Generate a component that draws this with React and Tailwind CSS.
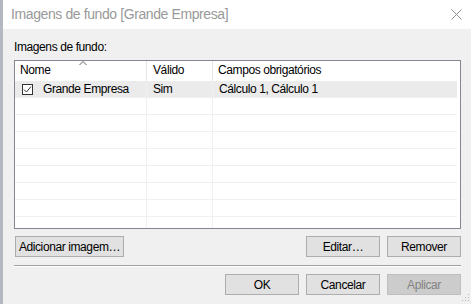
import React from "react";

const font = { fontFamily: '"Liberation Sans", Arial, sans-serif' };

const Btn = ({ children, className = "", disabled }) => (
  <div
    className={
      "h-[21px] flex items-center justify-center border text-[12px] tracking-[-0.4px] leading-none whitespace-nowrap " +
      (disabled
        ? "bg-[#cccccc] border-[#bfbfbf] text-[#838383] "
        : "bg-[#e1e1e1] border-[#adadad] text-black ") +
      className
    }
  >
    {children}
  </div>
);

const Check = () => (
  <svg width="11" height="11" viewBox="0 0 11 11" className="shrink-0">
    <rect x="0.5" y="0.5" width="10" height="10" fill="white" stroke="#333" />
    <polyline points="2,5.5 4.5,8 9,2.5" fill="none" stroke="#333" strokeWidth="1" />
  </svg>
);

const rows = 9;

export default function App() {
  return (
    <div className="w-[471px] h-[304px] flex overflow-hidden" style={font}>
      {/* behind window edge */}
      <div className="w-[3px] h-full bg-[#b3b8c3]" />

      <div className="flex-1 flex flex-col">
        {/* Title bar */}
        <div className="h-[29px] bg-white flex items-center justify-between pl-[8px] pr-[9px]">
          <span className="text-[14px] tracking-[-0.4px] text-[#999999] whitespace-nowrap">
            Imagens de fundo [Grande Empresa]
          </span>
          <svg width="11" height="11" viewBox="0 0 11 11">
            <path d="M0.5 0.5 L10.5 10.5 M10.5 0.5 L0.5 10.5" stroke="#8f8f8f" strokeWidth="1" />
          </svg>
        </div>

        {/* Body */}
        <div className="flex-1 bg-[#f0f0f0] pl-[11px] pr-[10px] pt-[11px] relative text-[12px] tracking-[-0.4px]">
          <div className="h-[15px] leading-[15px] text-black">Imagens de fundo:</div>

          {/* List view */}
          <div className="mt-[5px] h-[169px] border border-[#828790] bg-white overflow-hidden pr-[3px] text-black whitespace-nowrap">
            <div className="h-[20px] flex">
              <div className="w-[132px] border-r border-[#e5e5e5] pl-[5px] flex items-end pb-[2px] relative">
                Nome
                <svg width="8" height="5" viewBox="0 0 8 5" className="absolute left-[64px] top-0">
                  <polyline points="0.5,4 4,0.5 7.5,4" fill="none" stroke="#5f5f5f" strokeWidth="1" />
                </svg>
              </div>
              <div className="w-[66px] border-r border-[#e5e5e5] pl-[6px] flex items-end pb-[2px]">Válido</div>
              <div className="flex-1 pl-[5px] flex items-end pb-[2px]">Campos obrigatórios</div>
            </div>

            <div className="h-[17px] flex bg-[#ebebeb] border-b border-[#f0f0f0]">
              <div className="w-[132px] border-r border-[#f0f0f0] pl-[7px] flex items-center gap-[10px]">
                <Check />
                <span>Grande Empresa</span>
              </div>
              <div className="w-[66px] border-r border-[#f0f0f0] pl-[6px] flex items-center">Sim</div>
              <div className="flex-1 pl-[6px] flex items-center">Cálculo 1, Cálculo 1</div>
            </div>

            {Array.from({ length: rows }).map((_, i) => (
              <div key={i} className="h-[17px] flex border-b border-[#f0f0f0]">
                <div className="w-[132px] border-r border-[#f0f0f0]" />
                <div className="w-[66px] border-r border-[#f0f0f0]" />
                <div className="flex-1" />
              </div>
            ))}
          </div>

          {/* Action buttons */}
          <div className="mt-[7px] flex">
            <Btn className="w-[109px] ml-[1px]">Adicionar imagem…</Btn>
            <div className="flex-1" />
            <Btn className="w-[74px]">Editar…</Btn>
            <Btn className="w-[74px] ml-[7px]">Remover</Btn>
          </div>

          <div className="mt-[8px] border-t border-[#a0a0a0] border-b border-b-white" />

          <div className="mt-[7px] flex justify-end gap-[7px]">
            <Btn className="w-[74px]">OK</Btn>
            <Btn className="w-[74px]">Cancelar</Btn>
            <Btn className="w-[74px]" disabled>Aplicar</Btn>
          </div>

          {/* Resize grip */}
          <svg width="8" height="8" viewBox="0 0 8 8" className="absolute right-[1px] bottom-[2px]">
            <rect x="6" y="0" width="1" height="1" fill="#b9b9b9" />
            <rect x="3" y="3" width="1" height="1" fill="#b9b9b9" />
            <rect x="6" y="3" width="1" height="1" fill="#b9b9b9" />
            <rect x="0" y="6" width="1" height="1" fill="#b9b9b9" />
            <rect x="3" y="6" width="1" height="1" fill="#b9b9b9" />
            <rect x="6" y="6" width="1" height="1" fill="#b9b9b9" />
          </svg>
        </div>
      </div>
    </div>
  );
}
